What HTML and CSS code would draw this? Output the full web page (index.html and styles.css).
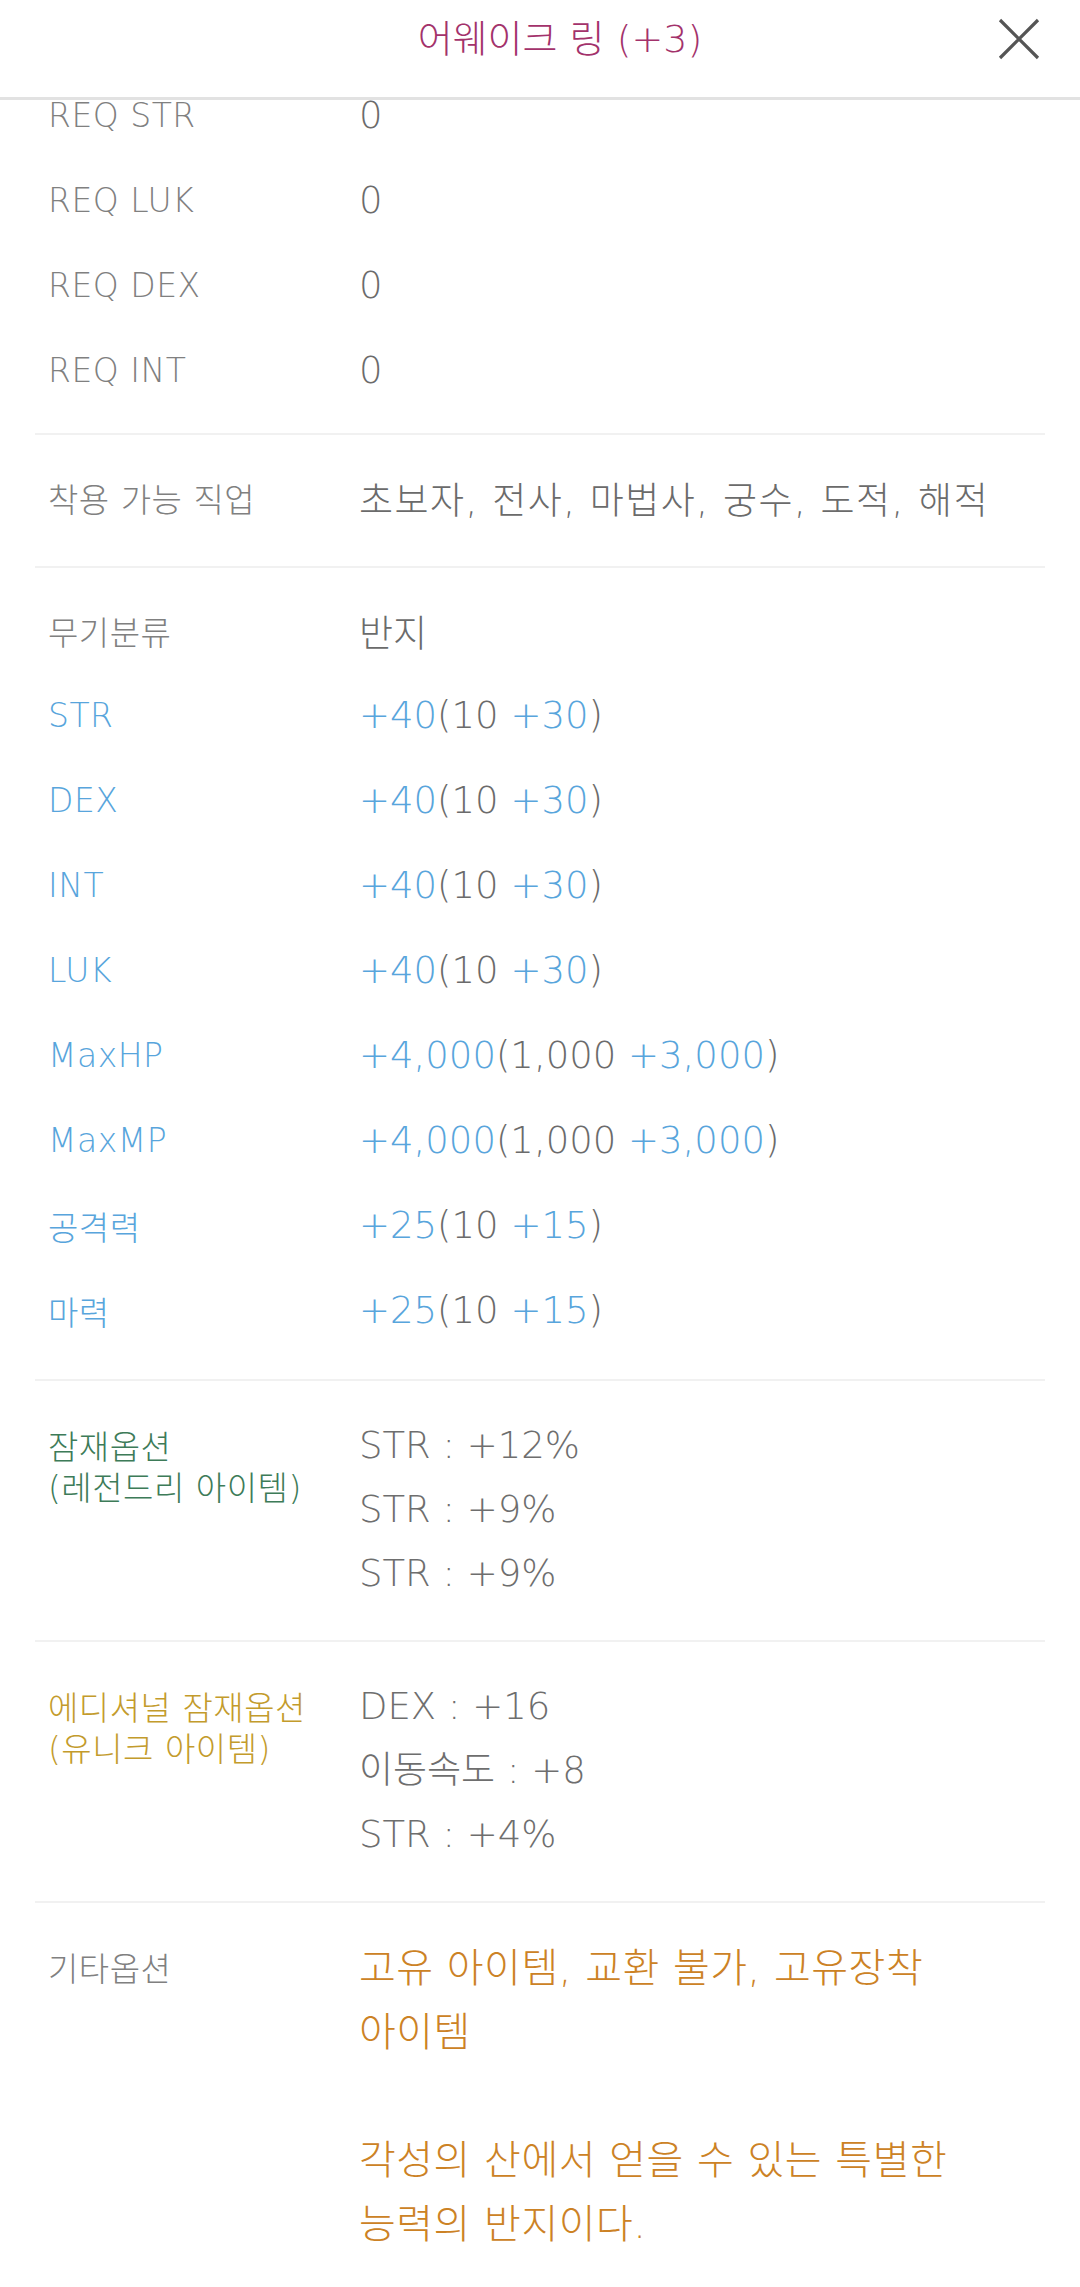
FILE: index.html
```html
<!DOCTYPE html>
<html lang="ko">
<head>
  <meta charset="UTF-8">
  <title>어웨이크 링 (+3)</title>
  <meta name="viewport" content="width=device-width, initial-scale=1.0">
  <link rel="stylesheet" href="styles.css">
</head>
<body>

  <header class="top">
    <h1 class="title">어웨이크 링 (+3)</h1>
    <button class="close" aria-label="닫기">
      <svg viewBox="0 0 42 42" width="42" height="42">
        <path d="M2 2 L40 40 M40 2 L2 40" stroke="#555" stroke-width="3.2" fill="none"/>
      </svg>
    </button>
  </header>

  <main class="sheet">
    <div class="sheet-inner">

      <!-- required stats (list is scrolled, top rows sit under the header) -->
      <section class="group group-first">
        <div class="row"><span class="key">REQ STR</span><span class="val">0</span></div>
        <div class="row"><span class="key">REQ LUK</span><span class="val">0</span></div>
        <div class="row"><span class="key">REQ DEX</span><span class="val">0</span></div>
        <div class="row"><span class="key">REQ INT</span><span class="val">0</span></div>
      </section>

      <section class="group">
        <div class="row"><span class="key">착용 가능 직업</span><span class="val val-jobs">초보자, 전사, 마법사, 궁수, 도적, 해적</span></div>
      </section>

      <section class="group">
        <div class="row"><span class="key">무기분류</span><span class="val">반지</span></div>
        <div class="row"><span class="key blue">STR</span><span class="val"><b class="blue">+40</b>(10 <b class="blue">+30</b>)</span></div>
        <div class="row"><span class="key blue">DEX</span><span class="val"><b class="blue">+40</b>(10 <b class="blue">+30</b>)</span></div>
        <div class="row"><span class="key blue">INT</span><span class="val"><b class="blue">+40</b>(10 <b class="blue">+30</b>)</span></div>
        <div class="row"><span class="key blue">LUK</span><span class="val"><b class="blue">+40</b>(10 <b class="blue">+30</b>)</span></div>
        <div class="row"><span class="key blue">MaxHP</span><span class="val"><b class="blue">+4,000</b>(1,000 <b class="blue">+3,000</b>)</span></div>
        <div class="row"><span class="key blue">MaxMP</span><span class="val"><b class="blue">+4,000</b>(1,000 <b class="blue">+3,000</b>)</span></div>
        <div class="row"><span class="key blue">공격력</span><span class="val"><b class="blue">+25</b>(10 <b class="blue">+15</b>)</span></div>
        <div class="row"><span class="key blue">마력</span><span class="val"><b class="blue">+25</b>(10 <b class="blue">+15</b>)</span></div>
      </section>

      <section class="group group-opt">
        <div class="opt">
          <div class="key green">잠재옵션<br>(레전드리 아이템)</div>
          <div class="lines">
            <div>STR : +12%</div>
            <div>STR : +9%</div>
            <div>STR : +9%</div>
          </div>
        </div>
      </section>

      <section class="group group-opt">
        <div class="opt">
          <div class="key gold">에디셔널 잠재옵션<br>(유니크 아이템)</div>
          <div class="lines">
            <div>DEX : +16</div>
            <div>이동속도 : +8</div>
            <div>STR : +4%</div>
          </div>
        </div>
      </section>

      <section class="group group-opt">
        <div class="opt">
          <div class="key">기타옵션</div>
          <div class="lines lines-etc orange">
            <div>고유 아이템, 교환 불가, 고유장착<br>아이템</div>
            <div>&nbsp;</div>
            <div>각성의 산에서 얻을 수 있는 특별한<br>능력의 반지이다.</div>
          </div>
        </div>
      </section>

    </div>
  </main>

</body>
</html>
```

FILE: styles.css
```css
html, body {
  margin: 0;
  padding: 0;
  background: #fff;
}
body {
  font-family: "DejaVu Sans", "Noto Sans CJK KR", sans-serif;
  font-weight: 200;
  color: #6e6e6e;
  height: 2287px;
  overflow: hidden;
}

/*top bar*/
.top{
  display: flex;
  align-items: center;
  height: 97px;
  border-bottom: 3px solid #e2e2e2;
  background: #fff;
}
.title{
  flex: 1;
  margin: 0;
  padding-left: 122px;
  padding-bottom: 20px;
  text-align: center;
  font-size: 38px;
  font-weight: 200;
  color: #a3326b;
  line-height: 1;
}
.close{
  width: 42px;
  height: 42px;
  margin: 0 40px 20px 0;
  padding: 0;
  border: 0;
  background: none;
}
.close svg{
  display: block;
}

/*scrolled sheet*/
.sheet{
  overflow: hidden;
}
.sheet-inner{
  margin: -27px 35px 0;
}
.group{
  border-top: 2px solid #f1f1f1;
  padding: 20px 13px 26px;
}
.group-first{
  border-top: 0;
  padding-top: 0;
  padding-bottom: 20px;
}
.row{
  display: grid;
  grid-template-columns: 311px 1fr;
  align-items: center;
  height: 85px;
}
.key{
  font-size: 33px;
  letter-spacing: 0.5px;
  color: #808080;
}
.val{
  font-size: 37px;
  color: #6b6b6b;
}
.val b{
  font-weight: 200;
}
.val-jobs{
  letter-spacing: 1.5px;
}
.blue{
  color: #58a5dc;
}
.green{
  color: #3d7b58;
}
.gold{
  color: #c39b2c;
}
.orange{
  color: #cc8225;
}

/*option blocks*/
.group-opt{
  padding: 33px 13px 34px;
}
.opt{
  display: grid;
  grid-template-columns: 311px 1fr;
  align-items: start;
}
.opt .key{
  margin-top: 13px;
  line-height: 41px;
}
.lines{
  font-size: 37px;
  line-height: 64px;
}
.lines-etc{
  font-size: 40px;
  letter-spacing: 0.5px;
}
```
